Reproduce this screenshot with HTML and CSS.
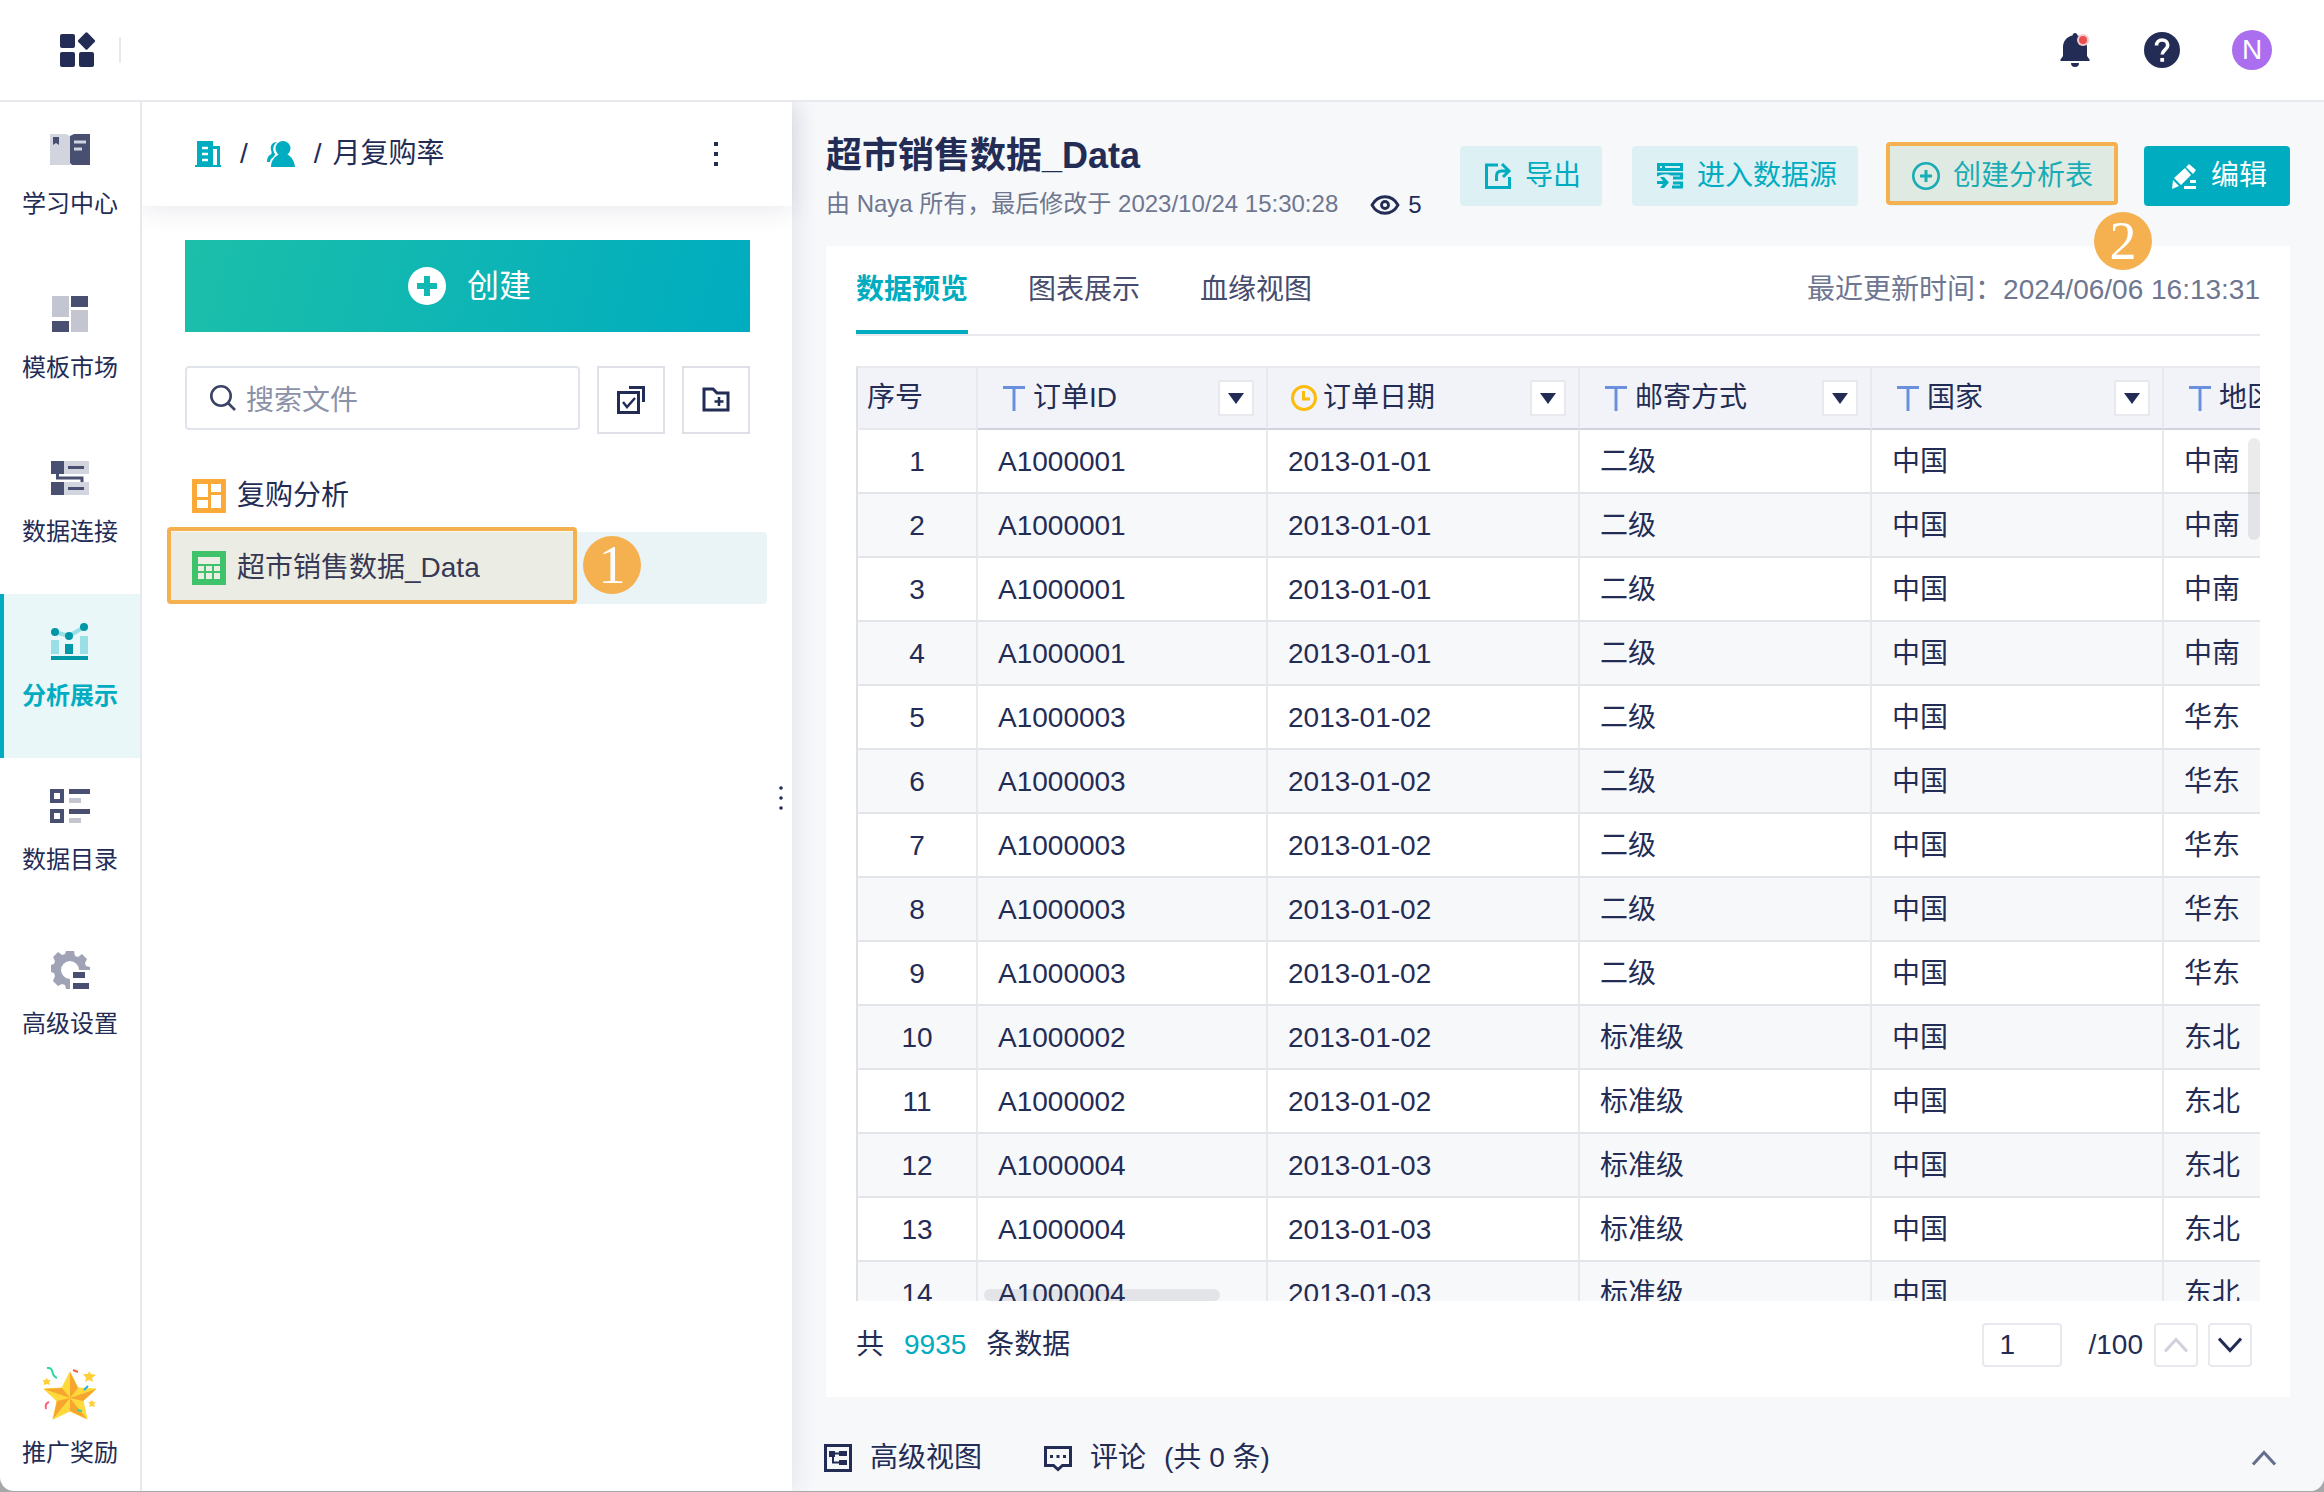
FILE: index.html
```html
<!DOCTYPE html>
<html lang="zh-CN">
<head>
<meta charset="utf-8">
<meta name="viewport" content="width=device-width, initial-scale=1">
<title>超市销售数据_Data</title>
<link rel="stylesheet" href="styles.css">
</head>
<body>
<div class="window">
  <header class="topbar">
    <button class="icon-button" aria-label="应用">
      <svg width="36" height="36" viewBox="0 0 36 36" fill="#232c55"><rect x="0" y="2" width="15" height="14" rx="2"/><rect x="0" y="20" width="15" height="15" rx="2"/><rect x="19" y="20" width="15" height="15" rx="2"/><rect x="20" y="2.500" width="13" height="13" rx="1.500" transform="rotate(45 26.500 9)"/></svg>
    </button>
    <span class="topbar-divider"></span>
    <div class="topbar-actions">
      <button class="icon-button" aria-label="通知">
        <svg width="30" height="36" viewBox="0 0 30 36"><path d="M15 1c1.500 0 2.300 1 2.500 2.400 5.500 1.200 9.500 5.600 9.500 11.600v9l2.500 3.500V29H.500v-1.500L3 24v-9C3 9 7 4.600 12.500 3.400 12.700 2 13.500 1 15 1z" fill="#232c55"/><path d="M11 31h8a4 4 0 0 1-8 0z" fill="#232c55"/><circle cx="23" cy="8" r="6" fill="#f8c9cc"/><circle cx="23" cy="8" r="4" fill="#ea4f50"/></svg>
      </button>
      <button class="icon-button" aria-label="帮助">
        <svg width="36" height="36" viewBox="0 0 36 36"><circle cx="18" cy="18" r="18" fill="#232c55"/><path d="M12.500 13.500c0-3.500 2.300-5.500 5.500-5.500s5.700 2 5.700 5.200c0 4.600-5.500 4.600-5.500 9.300" fill="none" stroke="#fff" stroke-width="3.600"/><rect x="16.300" y="26" width="3.800" height="3.800" fill="#fff"/></svg>
      </button>
      <button class="avatar">N</button>
    </div>
  </header>

  <div class="body">
    <nav class="rail">
      <a class="rail-item" href="#">
        <svg width="42" height="38" viewBox="0 0 42 38"><path d="M1 3h16l4 2v29H1z" fill="#d2d4de"/><path d="M41 3H25l-4 2v27l2 2h18z" fill="#484f70"/><path d="M4 6h6v8l-3-2-3 2z" fill="#484f70"/><path d="M25 11h12M25 18h8" stroke="#d2d4de" stroke-width="3"/></svg>
        <span>学习中心</span></a>
      <a class="rail-item" href="#">
        <svg width="42" height="38" viewBox="0 0 42 38"><path d="M3 1h17v21H3zM22 15h17v22H22z" fill="#c3c5d0"/><path d="M22 1h17v11H22zM3 26h17v11H3z" fill="#484f70"/></svg>
        <span>模板市场</span></a>
      <a class="rail-item" href="#">
        <svg width="42" height="38" viewBox="0 0 42 38"><path d="M14 2h26v13H14zM14 23h26v13H14z" fill="#d2d4de"/><path d="M2 2h13v13H2zM2 23h13v13H2z" fill="#484f70"/><path d="M8.500 14v5H33v4M19 8.500h16M19 29.500h16" fill="none" stroke="#484f70" stroke-width="3"/></svg>
        <span>数据连接</span></a>
      <a class="rail-item active" href="#">
        <svg width="42" height="38" viewBox="0 0 42 38"><path d="M6 9l14 4L35 4" fill="none" stroke="#99dfe5" stroke-width="4"/><path d="M2 17h8v14H2zM31 13h8v18h-8z" fill="#99dfe5"/><path d="M16 21h8v10h-8zM2 33h37v4H2z" fill="#0097a7"/><circle cx="6" cy="9" r="4" fill="#0097a7"/><circle cx="20" cy="13" r="4" fill="#0097a7"/><circle cx="35" cy="4" r="4" fill="#0097a7"/></svg>
        <span>分析展示</span></a>
      <a class="rail-item" href="#">
        <svg width="42" height="38" viewBox="0 0 42 38"><path d="M3 4h10v10H3zM3 24h10v10H3z" fill="none" stroke="#484f70" stroke-width="4"/><path d="M20 4.500h21M20 24.500h21" stroke="#484f70" stroke-width="5"/><path d="M20 13.500h12M20 33.500h12" stroke="#c3c5d0" stroke-width="5"/></svg>
        <span>数据目录</span></a>
      <a class="rail-item" href="#">
        <svg width="42" height="38" viewBox="0 0 42 38"><path d="M17 0h8l1 5 3 1 4-3 5 5-2 4 1 3 4 1v3H30a9 9 0 1 0-9 9v10h-4l-1-4-3-1-4 2-5-5 2-5-1-3-3-1v-7l3-1 1-3-2-4 5-5 4 3 3-1z" fill="#a0a2b5"/><path d="M24 21h12v6H24zM24 32h16v6H24z" fill="#484f70"/></svg>
        <span>高级设置</span></a>
      <a class="rail-item reward" href="#">
        <svg width="54" height="54" viewBox="0 0 54 54"><path d="M27 5l8 16 18 1-13 12 4 18-17-8-17 8 4-18L1 22l18-1z" fill="#ffd93b" stroke="#ffd93b" stroke-width="1" stroke-linejoin="round"/><path d="M27 31V5l8 16zM27 31l26-9-13 12zM27 31l17 21-17-8zM27 31L10 52l4-18zM27 31L1 22l18-1z" fill="#f6a62f"/><path d="M4 1c8-1 3 8 10 10" fill="none" stroke="#2ad8a2" stroke-width="2"/><path d="M30 3l5 2" stroke="#f0653a" stroke-width="2"/><path d="M3 42c-1-4 0-6 3-7" fill="none" stroke="#ff5d75" stroke-width="2"/><path d="M41 23l4-4" stroke="#24aee0" stroke-width="2"/><path d="M34 43l5 1" stroke="#2ad8a2" stroke-width="2"/><path d="M46 4l2 3 5 1-4 3 1 4-4-2-4 2 1-4-3-4 5 0zM4 11l1 2 3 0-2 2 1 3-3-1-3 1 0-3-2-2 3 0zM49 33l1 2 3 0-2 2 1 3-3-1-3 1 1-3-2-2 2 0z" fill="#ffd03a"/></svg>
        <span>推广奖励</span></a>
    </nav>

    <aside class="files">
      <div class="crumbs">
        <a href="#" aria-label="企业"><svg width="26" height="26" viewBox="0 0 26 26"><path d="M2 0h16v5h7v19h1v2H0v-2h2zM18 8v16h4V8z" fill="#00acc0" fill-rule="evenodd"/><path d="M7 7h6M7 13h6M7 19h6" stroke="#fff" stroke-width="2.500"/></svg></a>
        <span>/</span>
        <a href="#" aria-label="成员"><svg width="28" height="26" viewBox="0 0 28 26"><path d="M10 1C5 1 3 5 4 9c1 3 1 4-1 5-2 1-3 3-3 7h3c0-4 5-5 5-8C5 9 6 4 10 1z" fill="#00acc0"/><circle cx="16" cy="7.500" r="7.500" fill="#00acc0"/><path d="M4 26c0-7 4-10 8-13h8c5 3 7 7 8 13z" fill="#00acc0"/></svg></a>
        <span>/</span>
        <span class="crumb-name">月复购率</span>
        <button class="icon-button more" aria-label="更多"><svg width="4" height="24" viewBox="0 0 4 24" fill="#232c55"><path d="M0 0h4v4H0zM0 10h4v4H0zM0 20h4v4H0z"/></svg></button>
      </div>
      <div class="file-tools">
        <button class="create"><svg width="38" height="38" viewBox="0 0 38 38"><circle cx="19" cy="19" r="19" fill="#fff"/><path d="M19 9v20M9 19h20" stroke="#12b8b2" stroke-width="6"/></svg>创建</button>
        <div class="search-row">
          <label class="search"><svg width="26" height="26" viewBox="0 0 26 26" fill="none" stroke="#3b4365" stroke-width="2.600"><circle cx="11" cy="11" r="9.700"/><path d="M18 18l7 7"/></svg><input type="text" placeholder="搜索文件" aria-label="搜索文件"></label>
          <button class="square" aria-label="批量选择"><svg width="28" height="28" viewBox="0 0 28 28" fill="none" stroke="#232c55" stroke-width="3"><path d="M1.500 6.500h20v20h-20zM12 1.500h14.500V16"/><path d="M6 16l4 5 8-9" stroke-width="2.500"/></svg></button>
          <button class="square" aria-label="新建文件夹"><svg width="28" height="26" viewBox="0 0 28 26" fill="none" stroke="#232c55"><path d="M2 2h9l4 4h11v17H2z" stroke-width="3"/><path d="M17 10v9M12.500 14.500h9" stroke-width="2.500"/></svg></button>
        </div>
      </div>
      <ul class="file-list">
        <li><a class="file" href="#"><svg width="34" height="34" viewBox="0 0 34 34"><path d="M0 0h34v34H0z" fill="#fba938"/><path d="M5 5h11v13H5zM19 5h10v8H19zM5 21h11v8H5zM19 16h10v13H19z" fill="#fff"/></svg>复购分析</a></li>
        <li><a class="file selected" href="#"><svg width="34" height="34" viewBox="0 0 34 34"><path d="M0 0h34v34H0z" fill="#2ac66f"/><path d="M6 6h22v7H6zM6 15h6v5H6zM14 15h6v5h-6zM22 15h6v5h-6zM6 22h6v6H6zM14 22h6v6h-6zM22 22h6v6h-6z" fill="#ebf4f7"/></svg>超市销售数据_Data</a>
          <span class="mark mark-file"></span><span class="badge badge-one">1</span></li>
      </ul>
      <span class="resizer"><svg width="4" height="24" viewBox="0 0 4 24" fill="#232c55"><circle cx="2" cy="2" r="1.800"/><circle cx="2" cy="12" r="1.800"/><circle cx="2" cy="22" r="1.800"/></svg></span>
    </aside>

    <main class="main">
      <div class="page-head">
        <div class="page-title">
          <h1>超市销售数据_Data</h1>
          <p>由 Naya 所有，最后修改于 2023/10/24 15:30:28
            <span class="views"><svg width="30" height="20" viewBox="0 0 30 20" fill="none" stroke="#232c55" stroke-width="2.800"><path d="M2 10C8-1 22-1 28 10 22 21 8 21 2 10z"/><circle cx="15" cy="10" r="3.500"/></svg>5</span></p>
        </div>
        <div class="actions">
          <button class="action"><svg width="28" height="28" viewBox="0 0 28 28" fill="none" stroke="#00acc0" stroke-width="3"><path d="M14 3H2.500v22.500h23V15"/><path d="M12.500 19v-5q0-5 5-5H24M18 2l7 7-6 6"/></svg>导出</button>
          <button class="action"><svg width="28" height="28" viewBox="0 0 28 28" fill="#00acc0"><path d="M1 1h26v8H1zM4 4v2h2V4zM9 4v2h15V4z" fill-rule="evenodd"/><path d="M1 10.500h26v7H17v-3h7v-1H15q-6-3-14 1zM17 19.500h10v7H16v-3h8v-1h-7z"/><path d="M1 19h6l-3-4h4l5 5.500L8 26H4l3-4H1z"/></svg>进入数据源</button>
          <div class="marked"><button class="action"><svg width="28" height="28" viewBox="0 0 28 28" fill="none" stroke="#00acc0" stroke-width="2.600"><circle cx="14" cy="14" r="12.700"/><path d="M14 8v12M8 14h12" stroke-width="3"/></svg>创建分析表</button>
            <span class="mark mark-action"></span><span class="badge badge-two">2</span></div>
          <button class="action primary"><svg width="28" height="28" viewBox="0 0 28 28" fill="#fff"><path d="M19 2l7 6-3 4-7-7zM15 6l6 7L11 23l-7-7zM3 18l6 6-7 3zM20 18h6v3h-6zM14 24h12v3H14z"/></svg>编辑</button>
        </div>
      </div>

      <section class="card">
        <div class="tabs">
          <button class="tab active">数据预览</button>
          <button class="tab">图表展示</button>
          <button class="tab">血缘视图</button>
          <span class="updated">最近更新时间：2024/06/06 16:13:31</span>
        </div>
        <div class="grid">
          <table>
            <colgroup><col class="col-index"><col class="col-id"><col class="col-date"><col class="col-text"><col class="col-text"><col class="col-text"></colgroup>
            <thead><tr>
              <th scope="col">序号</th>
              <th scope="col"><div class="head"><svg width="26" height="26" viewBox="0 0 26 26"><path d="M2 2.500h22M13 2v24" stroke="#6a8fdc" stroke-width="3"/></svg>订单ID<button class="drop" aria-label="订单ID 菜单"></button></div></th>
              <th scope="col"><div class="head"><svg width="26" height="26" viewBox="0 0 26 26" fill="none" stroke="#fbbc0d" stroke-width="3"><circle cx="13" cy="13" r="11.500"/><path d="M12.500 6v8H19"/></svg>订单日期<button class="drop" aria-label="订单日期 菜单"></button></div></th>
              <th scope="col"><div class="head"><svg width="26" height="26" viewBox="0 0 26 26"><path d="M2 2.500h22M13 2v24" stroke="#6a8fdc" stroke-width="3"/></svg>邮寄方式<button class="drop" aria-label="邮寄方式 菜单"></button></div></th>
              <th scope="col"><div class="head"><svg width="26" height="26" viewBox="0 0 26 26"><path d="M2 2.500h22M13 2v24" stroke="#6a8fdc" stroke-width="3"/></svg>国家<button class="drop" aria-label="国家 菜单"></button></div></th>
              <th scope="col"><div class="head"><svg width="26" height="26" viewBox="0 0 26 26"><path d="M2 2.500h22M13 2v24" stroke="#6a8fdc" stroke-width="3"/></svg>地区<button class="drop" aria-label="地区 菜单"></button></div></th>
            </tr></thead>
            <tbody>
              <tr><td>1</td><td>A1000001</td><td>2013-01-01</td><td>二级</td><td>中国</td><td>中南</td></tr>
              <tr><td>2</td><td>A1000001</td><td>2013-01-01</td><td>二级</td><td>中国</td><td>中南</td></tr>
              <tr><td>3</td><td>A1000001</td><td>2013-01-01</td><td>二级</td><td>中国</td><td>中南</td></tr>
              <tr><td>4</td><td>A1000001</td><td>2013-01-01</td><td>二级</td><td>中国</td><td>中南</td></tr>
              <tr><td>5</td><td>A1000003</td><td>2013-01-02</td><td>二级</td><td>中国</td><td>华东</td></tr>
              <tr><td>6</td><td>A1000003</td><td>2013-01-02</td><td>二级</td><td>中国</td><td>华东</td></tr>
              <tr><td>7</td><td>A1000003</td><td>2013-01-02</td><td>二级</td><td>中国</td><td>华东</td></tr>
              <tr><td>8</td><td>A1000003</td><td>2013-01-02</td><td>二级</td><td>中国</td><td>华东</td></tr>
              <tr><td>9</td><td>A1000003</td><td>2013-01-02</td><td>二级</td><td>中国</td><td>华东</td></tr>
              <tr><td>10</td><td>A1000002</td><td>2013-01-02</td><td>标准级</td><td>中国</td><td>东北</td></tr>
              <tr><td>11</td><td>A1000002</td><td>2013-01-02</td><td>标准级</td><td>中国</td><td>东北</td></tr>
              <tr><td>12</td><td>A1000004</td><td>2013-01-03</td><td>标准级</td><td>中国</td><td>东北</td></tr>
              <tr><td>13</td><td>A1000004</td><td>2013-01-03</td><td>标准级</td><td>中国</td><td>东北</td></tr>
              <tr><td>14</td><td>A1000004</td><td>2013-01-03</td><td>标准级</td><td>中国</td><td>东北</td></tr>
            </tbody>
          </table>
          <span class="scroll-x"></span><span class="scroll-y"></span>
        </div>
        <div class="pager">
          <span>共</span><span class="count">9935</span><span>条数据</span>
          <input class="page-input" type="text" value="1" aria-label="页码">
          <span class="page-total">/100</span>
          <button class="page-button" aria-label="上一页" disabled><svg width="24" height="16" viewBox="0 0 24 16" fill="none" stroke="#cfd1dd" stroke-width="3"><path d="M1 14.500l11-12 11 12"/></svg></button>
          <button class="page-button" aria-label="下一页"><svg width="24" height="16" viewBox="0 0 24 16" fill="none" stroke="#232c55" stroke-width="3"><path d="M1 1.500l11 12 11-12"/></svg></button>
        </div>
      </section>

      <footer class="bottom">
        <button class="bottom-link"><svg width="28" height="28" viewBox="0 0 28 28"><path d="M1.500 1.500h25v25h-25z" fill="none" stroke="#232c55" stroke-width="3"/><path d="M5 7h6v6H5zM15 7h8v5h-8zM15 16h8v5h-8z" fill="#232c55"/><path d="M8 9.500h9M9 12v6.500h7" fill="none" stroke="#232c55" stroke-width="2"/></svg>高级视图</button>
        <button class="bottom-link"><svg width="28" height="28" viewBox="0 0 28 28"><path d="M1.500 3.500h25v18h-8l-4.500 4-4.500-4h-8z" fill="none" stroke="#232c55" stroke-width="3"/><path d="M6 11h3v3H6zM12.500 11h3v3h-3zM19 11h3v3h-3z" fill="#232c55"/></svg><span>评论</span><span>(共 0 条)</span></button>
        <button class="icon-button expand" aria-label="展开"><svg width="24" height="16" viewBox="0 0 24 16" fill="none" stroke="#666f8e" stroke-width="3"><path d="M1 14.500l11-12 11 12"/></svg></button>
      </footer>
    </main>
  </div>
</div>
</body>
</html>
```
FILE: styles.css
```css
* { box-sizing: border-box; }

:root {
  --ink: #232c55;
  --muted: #6e7690;
  --teal: #00acc0;
  --line: #e8e9ee;
  --orange: #f5b04f;
  --page: #f7f8fa;
}

body {
  margin: 0;
  height: 100vh;
  padding-bottom: 1px;
  background: #a5a7aa;
  color: var(--ink);
  font: 28px/40px "Liberation Sans", "Noto Sans CJK SC", sans-serif;
}

button, input { font: inherit; color: inherit; border: 0; padding: 0; background: none; }
a { color: inherit; text-decoration: none; }
svg { display: block; flex: none; }
.icon-button { display: flex; align-items: center; }

.window {
  display: flex;
  flex-direction: column;
  height: 100%;
  overflow: hidden;
  background: #fff;
  border-radius: 0 0 14px 14px;
}

/* Top bar */
.topbar {
  display: flex;
  align-items: center;
  flex: none;
  height: 102px;
  padding: 0 52px 0 60px;
  border-bottom: 2px solid var(--line);
}
.topbar-divider { width: 2px; height: 26px; margin-left: 23px; background: var(--line); }
.topbar-actions { display: flex; align-items: center; gap: 52px; margin-left: auto; }
.topbar-actions .icon-button:first-child { margin-right: 2px; }
.avatar { width: 40px; height: 40px; border-radius: 50%; background: #aa6eee; color: #fff; line-height: 40px; }

.body { display: flex; flex: 1; min-height: 0; }

/* Navigation rail */
.rail {
  display: flex;
  flex-direction: column;
  flex: none;
  width: 142px;
  border-right: 2px solid var(--line);
}
.rail-item {
  display: flex;
  flex-direction: column;
  align-items: center;
  gap: 17px;
  height: 164px;
  padding-top: 29px;
  border-left: 4px solid transparent;
  border-right: 4px solid transparent;
  font-size: 24px;
  line-height: 36px;
  white-space: nowrap;
}
.rail-item.active {
  border-left-color: var(--teal);
  border-right-color: #eaf7f8;
  background: #eaf7f8;
  color: var(--teal);
  font-weight: 700;
}
.rail-item.reward { gap: 14px; height: auto; margin-top: auto; padding: 0 0 20px; }

/* File panel */
.files {
  position: relative;
  z-index: 1;
  flex: none;
  width: 650px;
  background: #fff;
  box-shadow: 4px 0 24px rgba(35, 44, 85, .09);
  clip-path: inset(0 -40px 0 0);
}
.crumbs {
  display: flex;
  align-items: center;
  gap: 19px;
  height: 104px;
  padding: 0 74px 0 53px;
  box-shadow: 0 4px 24px rgba(35, 44, 85, .1);
}
.crumb-name { margin-left: -8px; }
.more { margin-left: auto; }
.file-tools { display: flex; flex-direction: column; gap: 34px; padding: 34px 42px 26px 43px; }
.create {
  display: flex;
  align-items: center;
  justify-content: center;
  gap: 21px;
  height: 92px;
  padding-left: 4px;
  background: linear-gradient(105deg, #1cbfa9, #00acc0);
  color: #fff;
  font-size: 32px;
}
.search-row { display: flex; align-items: flex-start; gap: 17px; }
.search {
  display: flex;
  align-items: center;
  flex: 1;
  min-width: 0;
  gap: 10px;
  height: 64px;
  padding: 0 23px;
  border: 2px solid #e0e4ec;
  border-radius: 4px;
}
.search input { flex: 1; min-width: 0; padding-top: 6px; outline: 0; }
.search input::placeholder { color: #8b91a7; opacity: 1; }
.square {
  display: flex;
  align-items: center;
  justify-content: center;
  flex: none;
  width: 68px;
  height: 68px;
  border: 2px solid #e0e1e8;
}
.file-list { margin: 0; padding: 0 25px; list-style: none; }
.file-list li { position: relative; }
.file {
  display: flex;
  align-items: center;
  gap: 11px;
  height: 72px;
  padding-left: 25px;
  border-radius: 4px;
}
.file.selected { background: #eaf4f7; }
.resizer { position: absolute; right: 9px; top: 684px; }

/* Step marks laid over controls */
.mark {
  position: absolute;
  border: 4px solid var(--orange);
  border-radius: 4px;
  background: rgba(245, 176, 79, .1);
  pointer-events: none;
}
.mark-file { left: 0; top: -5px; width: 410px; height: 77px; }
.mark-action { inset: -4px -4px 1px -2px; }
.badge {
  position: absolute;
  width: 58px;
  height: 58px;
  border-radius: 50%;
  background: var(--orange);
  color: #fff;
  font: 54px/58px "Liberation Serif", serif;
  text-align: center;
}
.badge-one { left: 416px; top: 4px; }
.badge-two { right: -38px; top: 66px; }

/* Main area */
.main {
  display: flex;
  flex-direction: column;
  flex: 1;
  min-width: 0;
  padding: 0 34px;
  background: var(--page);
}
.page-head { display: flex; justify-content: space-between; flex: none; height: 144px; padding-top: 30px; }
h1 { margin: 0; font-size: 36px; line-height: 48px; }
.page-title p { display: flex; align-items: center; gap: 32px; margin: 5px 0 0; color: var(--muted); font-size: 24px; line-height: 36px; white-space: nowrap; }
.views { display: flex; align-items: center; gap: 8px; padding-top: 2px; color: var(--ink); }
.actions { display: flex; align-items: flex-start; gap: 30px; padding-top: 14px; }
.marked { position: relative; }
.action {
  display: flex;
  align-items: center;
  gap: 13px;
  height: 60px;
  padding: 0 21px 0 24px;
  border-radius: 4px;
  background: #ddf1f4;
  color: var(--teal);
  white-space: nowrap;
}
.action.primary { padding: 0 23px 0 26px; background: var(--teal); color: #fff; }

.card {
  display: flex;
  flex-direction: column;
  flex: 1;
  min-height: 0;
  padding: 0 30px;
  background: #fff;
}
.tabs { display: flex; flex: none; gap: 60px; height: 90px; border-bottom: 2px solid var(--line); }
.tab { height: 88px; padding-top: 4px; border-bottom: 4px solid transparent; color: #454c6e; }
.tab.active { border-color: var(--teal); color: var(--teal); font-weight: 700; }
.updated { margin-left: auto; color: var(--muted); line-height: 88px; }

.grid { position: relative; flex: 1; min-height: 0; margin-top: 30px; overflow: hidden; }
table { width: 1600px; table-layout: fixed; border-collapse: separate; border-spacing: 0; }
.col-index { width: 122px; }
.col-id { width: 290px; }
.col-date { width: 312px; }
.col-text { width: 292px; }
th, td {
  height: 64px;
  padding: 2px 20px 0;
  border-right: 2px solid var(--line);
  border-bottom: 2px solid #e4e5ea;
  text-align: left;
  font-weight: 400;
  white-space: nowrap;
}
th { padding: 0 12px 0 23px; border-top: 2px solid var(--line); border-bottom-color: #d0d3da; background: #f2f3f8; }
th:first-child { padding: 0 9px; border-left: 2px solid #dfe0e6; border-bottom-color: var(--line); }
td:first-child { padding: 2px 0 0; border-left: 2px solid #dfe0e6; text-align: center; }
tbody tr:nth-child(even) { background: var(--page); }
.head { display: flex; align-items: center; gap: 6px; }
.drop {
  display: flex;
  align-items: center;
  justify-content: center;
  width: 36px;
  height: 36px;
  margin-left: auto;
  border: 2px solid var(--line);
  background: #fff;
}
.drop::before { content: ""; border: 8px solid transparent; border-top: 11px solid var(--ink); border-bottom: 0; }
.scroll-x, .scroll-y { position: absolute; border-radius: 6px; background: rgba(60, 60, 70, .1); }
.scroll-x { left: 128px; bottom: 0; width: 236px; height: 12px; }
.scroll-y { right: 0; top: 72px; width: 12px; height: 102px; }

.pager { display: flex; align-items: center; flex: none; gap: 20px; height: 96px; padding: 0 8px 8px 0; }
.count { color: var(--teal); }
.page-input { width: 80px; height: 44px; margin-left: auto; padding-left: 16px; border: 2px solid var(--line); border-radius: 4px; }
.page-total { margin-left: 7px; margin-right: -9px; }
.page-button {
  display: flex;
  align-items: center;
  justify-content: center;
  width: 44px;
  height: 44px;
  border: 2px solid var(--line);
  border-radius: 4px;
}
.page-button + .page-button { margin-left: -10px; }

.bottom { display: flex; align-items: center; flex: none; gap: 62px; height: 94px; margin-left: -2px; padding: 28px 14px 0 0; }
.bottom-link { display: flex; align-items: center; gap: 18px; }
.expand { margin-left: auto; }
```
